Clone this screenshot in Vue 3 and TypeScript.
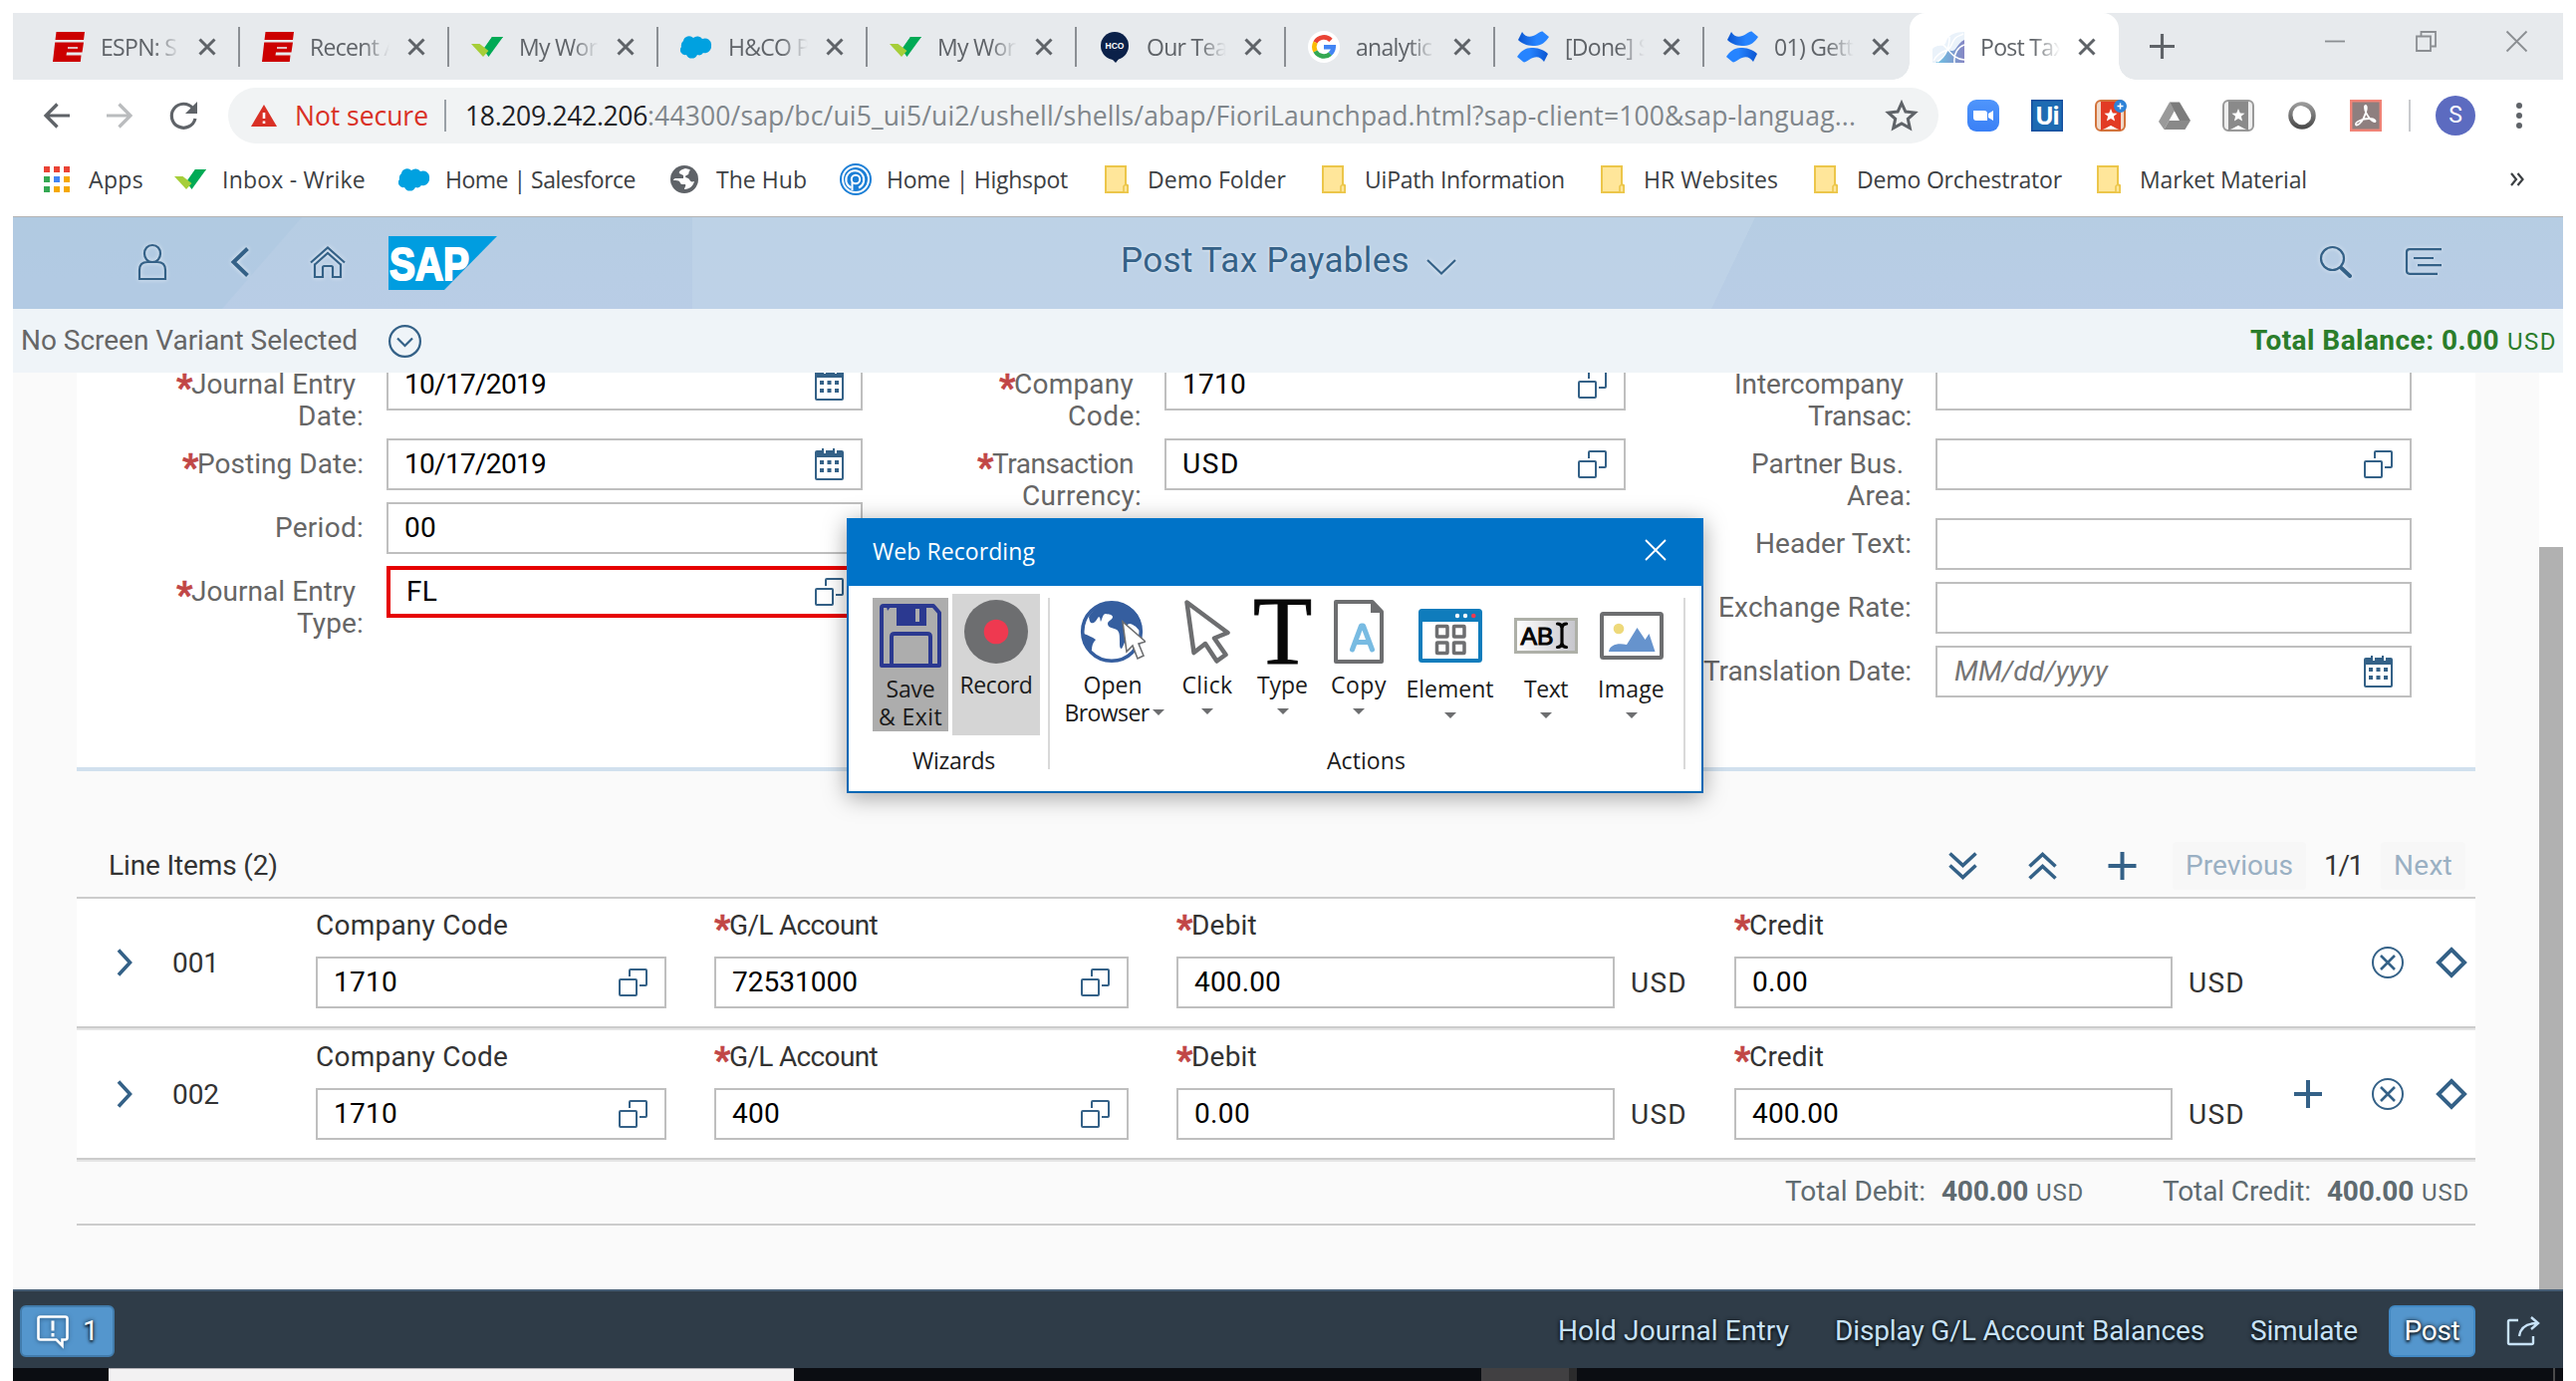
<script setup lang="ts">
import type { Directive } from 'vue'

interface Tab { icon: string; title: string; active?: boolean }
interface Bookmark { icon: string; label: string; iconWidth: number; gap: number; width: number; after: number }
interface Field {
  lines: [string, number][]
  required?: boolean
  value?: string
  width?: number
  icon?: string
  placeholder?: boolean
  error?: boolean
}
interface LineItem { id: string; company: string; account: string; accountWidth: number; debit: string; debitWidth: number; credit: string; creditWidth: number; add?: boolean }
interface Action { lines: [string, number][]; icon: string; w: number; h: number; cell: number; top: number; low?: boolean }

// Tracks a label so that it fills the given measure.
const vFit: Directive<HTMLElement, number> = {
  mounted(el, binding) {
    const count = (el.textContent ?? '').length
    if (!count || !binding.value) return
    const natural = el.getBoundingClientRect().width
    el.style.letterSpacing = `${(binding.value - natural) / count}px`
  },
}

const tabs: Tab[] = [
  { icon: 'espn', title: 'ESPN: S' },
  { icon: 'espn', title: 'Recent A' },
  { icon: 'wrike', title: 'My Wor' },
  { icon: 'cloud', title: 'H&CO P' },
  { icon: 'wrike', title: 'My Wor' },
  { icon: 'hco', title: 'Our Tea' },
  { icon: 'google', title: 'analytic' },
  { icon: 'confluence', title: '[Done] S' },
  { icon: 'confluence', title: '01) Gett' },
  { icon: 'fiori', title: 'Post Tax', active: true },
]

const bookmarks: Bookmark[] = [
  { icon: 'apps', label: 'Apps', iconWidth: 26, gap: 19, width: 55, after: 31 },
  { icon: 'wrike', label: 'Inbox - Wrike', iconWidth: 32, gap: 16, width: 144, after: 33 },
  { icon: 'cloud', label: 'Home | Salesforce', iconWidth: 32, gap: 15, width: 191, after: 35 },
  { icon: 'globe', label: 'The Hub', iconWidth: 28, gap: 18, width: 91, after: 33 },
  { icon: 'highspot', label: 'Home | Highspot', iconWidth: 32, gap: 15, width: 182, after: 37 },
  { icon: 'folder', label: 'Demo Folder', iconWidth: 24, gap: 19, width: 139, after: 36 },
  { icon: 'folder', label: 'UiPath Information', iconWidth: 24, gap: 19, width: 201, after: 36 },
  { icon: 'folder', label: 'HR Websites', iconWidth: 24, gap: 19, width: 135, after: 36 },
  { icon: 'folder', label: 'Demo Orchestrator', iconWidth: 24, gap: 19, width: 206, after: 35 },
  { icon: 'folder', label: 'Market Material', iconWidth: 24, gap: 19, width: 168, after: 0 },
]

const extensions = ['zoom', 'uipath', 'wunder-red', 'drive', 'wunder-grey', 'ring', 'acrobat']

const columns: { cls: string; fields: Field[] }[] = [
  {
    cls: 'col-1',
    fields: [
      { lines: [['Journal Entry', 165], ['Date:', 66]], required: true, value: '10/17/2019', width: 142, icon: 'calendar' },
      { lines: [['Posting Date:', 167]], required: true, value: '10/17/2019', width: 142, icon: 'calendar' },
      { lines: [['Period:', 89]], value: '00', width: 32 },
      { lines: [['Journal Entry', 165], ['Type:', 67]], required: true, value: 'FL', width: 31, icon: 'help', error: true },
    ],
  },
  {
    cls: 'col-2',
    fields: [
      { lines: [['Company', 120], ['Code:', 74]], required: true, value: '1710', width: 64, icon: 'help' },
      { lines: [['Transaction', 142], ['Currency:', 120]], required: true, value: 'USD', width: 58, icon: 'help' },
    ],
  },
  {
    cls: 'col-3',
    fields: [
      { lines: [['Intercompany', 170], ['Transac:', 104]] },
      { lines: [['Partner Bus.', 153], ['Area:', 65]], icon: 'help' },
      { lines: [['Header Text:', 157]] },
      { lines: [['Exchange Rate:', 194]] },
      { lines: [['Translation Date:', 209]], value: 'MM/dd/yyyy', width: 154, icon: 'calendar', placeholder: true },
    ],
  },
]

const items: LineItem[] = [
  { id: '001', company: '1710', account: '72531000', accountWidth: 126, debit: '400.00', debitWidth: 87, credit: '0.00', creditWidth: 56 },
  { id: '002', company: '1710', account: '400', accountWidth: 48, debit: '0.00', debitWidth: 56, credit: '400.00', creditWidth: 87, add: true },
]

const totals = [
  { label: 'Total Debit:', width: 141, value: '400.00' },
  { label: 'Total Credit:', width: 149, value: '400.00' },
]

const actions: Action[] = [
  { lines: [['Open', 59], ['Browser', 85]], icon: 'browser', w: 66, h: 64, cell: 96, top: 0 },
  { lines: [['Click', 51]], icon: 'pointer', w: 46, h: 64, cell: 52, top: 0 },
  { lines: [['Type', 51]], icon: 'type', w: 57, h: 64, cell: 57, top: 0 },
  { lines: [['Copy', 56]], icon: 'copy', w: 50, h: 64, cell: 54, top: 0 },
  { lines: [['Element', 88]], icon: 'element', w: 64, h: 54, cell: 87, top: 9, low: true },
  { lines: [['Text', 44]], icon: 'text', w: 64, h: 36, cell: 64, top: 18, low: true },
  { lines: [['Image', 67]], icon: 'image', w: 64, h: 48, cell: 65, top: 12, low: true },
]
</script>

<template>
  <div class="screen">
    <svg class="sprite" width="0" height="0">
      <defs>
        <linearGradient id="cf" x1="0" y1="0" x2="1" y2="0"><stop offset="0" stop-color="#0b55d0" /><stop offset=".6" stop-color="#2684ff" /></linearGradient>
        <linearGradient id="cf2" x1="1" y1="0" x2="0" y2="0"><stop offset="0" stop-color="#0b55d0" /><stop offset=".6" stop-color="#2684ff" /></linearGradient>
        <linearGradient id="fi" x1="0" y1="0" x2="1" y2="0"><stop offset="0" stop-color="#4fb8e0" /><stop offset="1" stop-color="#6d6cb6" /></linearGradient>
        <linearGradient id="tx" x1="0" y1="0" x2="1" y2="0"><stop offset="0" stop-color="#fff" /><stop offset="1" stop-color="#c5c5cb" /></linearGradient>
        <linearGradient id="rg" x1="0" y1="0" x2="0" y2="1"><stop offset="0" stop-color="#999" /><stop offset="1" stop-color="#4d4d4d" /></linearGradient>
        <linearGradient id="zm" x1="0" y1="0" x2="0" y2="1"><stop offset="0" stop-color="#4f95fb" /><stop offset="1" stop-color="#3a80f6" /></linearGradient>
      </defs>
      <symbol id="espn" viewBox="0 0 32 32"><path fill="#c00" d="M3.500 1H32l-1 8H2.500zM2.200 11.500H31l-1.500 10H14l-.5 3H28.500L27.800 31H0z" /><path stroke="#e7eaed" stroke-width="1.600" d="M15 17h10" /></symbol>
      <symbol id="wrike" viewBox="0 0 32 32"><path fill="#0a5" d="M21 6h11L17.500 26 12 18.500z" /><path fill="#a6ce39" d="M0 13h8.500L17.500 20 12 26z" /><path fill="#0a5" d="M21 6h11L18 20l-3-5z" /></symbol>
      <symbol id="cloud" viewBox="0 0 32 32"><path fill="#00a1e0" d="M3 10a6 6 0 0 1 10-3 6 6 0 0 1 9 1 6.500 6.500 0 0 1 9 7 6.500 6.500 0 0 1-8 7 5 5 0 0 1-6 2 6 6 0 0 1-11 0 5 5 0 0 1-5-8 6 6 0 0 1 2-6z" /></symbol>
      <symbol id="hco" viewBox="0 0 32 32"><circle cx="16" cy="15" r="14" fill="#0b2149" /><path fill="#0b2149" d="M12 27l5 5 4-5z" /></symbol>
      <symbol id="google" viewBox="0 0 32 32"><circle cx="16" cy="16" r="16" fill="#fff" /><g fill="none" stroke-width="4.600"><path stroke="#ea4335" d="M7.500 11.500A9.700 9.700 0 0 1 23 9.300" /><path stroke="#fbbc05" d="M7.500 11.500a9.700 9.700 0 0 0 0 9" /><path stroke="#34a853" d="M7.500 20.500A9.700 9.700 0 0 0 22.500 23" /><path stroke="#4285f4" d="M16 16.200h9.700A9.700 9.700 0 0 1 22.300 23" /></g></symbol>
      <symbol id="confluence" viewBox="0 0 32 32"><path fill="url(#cf)" d="M5 1c4 6 9 6 15 2 3-2 5-3 6-2l6 5c-3 5-8 9-14 9S6 14 1 9z" /><path fill="url(#cf2)" d="M27 31c-4-6-9-6-15-2-3 2-5 3-6 2l-6-5c3-5 8-9 14-9s12 1 17 6z" /></symbol>
      <symbol id="fiori" viewBox="0 0 32 32"><path fill="#dceaf7" d="M0 18c6-6 12 0 14-8 2-6 9-9 18-9v31H0z" opacity=".6" /><path fill="url(#fi)" d="M3 32c10-4 8-14 16-12 5 1 6-8 13-11v23z" opacity=".8" /><path fill="none" stroke="#fff" stroke-width="1.500" d="M1 30c8-14 14-6 18-16S26 6 31 3M8 12c8 4 10 16 24 17M17 6c0 12-4 20-12 25M22 32c-1-10 4-16 10-18" /></symbol>
      <symbol id="apps" viewBox="0 0 26 26"><path fill="#ea4335" d="M0 0h6v6H0zM10 0h6v6h-6zM20 0h6v6h-6z" /><path fill="#34a853" d="M0 10h6v6H0zM0 20h6v6H0z" /><path fill="#4285f4" d="M10 10h6v6h-6z" /><path fill="#f5a800" d="M20 10h6v6h-6zM10 20h6v6h-6zM20 20h6v6h-6z" /></symbol>
      <symbol id="globe" viewBox="0 0 28 28"><circle cx="14" cy="14" r="14" fill="#5f6368" /><path fill="#fff" d="M15 3c-4 1-7 3-6 5l4 2v3H5c-1 0-2 1-2 2 3 0 5 0 6 1s1 3 3 3h3c1 2-1 3-1 5 6 0 9-4 10-8-3 1-4 0-5-2s-4-1-4-3c0-1 2-1 3-2s0-2 1-3 1-2 0-2z" /></symbol>
      <symbol id="highspot" viewBox="0 0 32 32"><circle cx="16" cy="16" r="16" fill="#1c7fd6" /><g fill="none" stroke="#fff" stroke-width="2"><circle cx="16" cy="16" r="13" /><path d="M11.500 24.500A9 9 0 1 1 19 24.500" /></g><circle cx="16" cy="16" r="4.200" fill="#1c7fd6" stroke="#fff" stroke-width="2" /><path fill="none" stroke="#fff" stroke-width="2" d="M12.500 19v8" /></symbol>
      <symbol id="folder" viewBox="0 0 24 28"><path fill="#ffe69a" stroke="#ecc64a" stroke-width="2" d="M1 1h20v18l2 1v7H1z" /><path fill="#ffe69a" stroke="#ecc64a" stroke-width="1.600" d="M19 27v-6l2-2 2 2v6z" /></symbol>
      <symbol id="zoom" viewBox="0 0 32 32"><rect width="32" height="32" rx="9" fill="url(#zm)" /><path fill="#fff" d="M6 11h11q3 0 3 3v7H9q-3 0-3-3zM21 14l5-3v10l-5-3z" /></symbol>
      <symbol id="uipath" viewBox="0 0 32 32"><path fill="#1d6bb2" d="M0 0h32v32H0z" /><path fill="none" stroke="#164f9e" stroke-width="1.500" d="M.7.700h30.600v30.600H.7z" /></symbol>
      <symbol id="wunder-red" viewBox="0 0 32 32"><rect x="1" y="1" width="29" height="30" rx="5" fill="#f0d8c8" stroke="#d2743c" stroke-width="2" /><path fill="#e23b24" d="M6 2h20v29l-10-5-10 5z" /><path fill="#fff" d="M16 9l1.800 4.500 4.700.3-3.600 3 1.200 4.700-4.100-2.600-4.100 2.600 1.200-4.700-3.600-3 4.700-.3zM11 29l5-3 5 3z" /><circle cx="25.500" cy="6.500" r="6.500" fill="#2c82d8" /><path stroke="#fff" stroke-width="1.500" d="M22.500 6.500h6M25.500 3.500v6" /></symbol>
      <symbol id="wunder-grey" viewBox="0 0 32 32"><rect x="1" y="1" width="30" height="30" rx="5" fill="#eee" stroke="#999" stroke-width="2" /><path fill="#8a8a8a" d="M6 2h20v29l-10-5-10 5z" /><path fill="#fff" d="M16 9l1.800 4.500 4.700.3-3.600 3 1.200 4.700-4.100-2.600-4.100 2.600 1.200-4.700-3.600-3 4.700-.3zM11 29l5-3 5 3z" /></symbol>
      <symbol id="drive" viewBox="0 0 32 32"><path fill="#9a9a9a" d="M11 2.500L0 22l5.500 8L16 11z" /><path fill="#7c7c7c" d="M11 2.500h10L32 21H21z" /><path fill="#898989" d="M10.500 21H32l-5.500 9h-21z" /></symbol>
      <symbol id="ring" viewBox="0 0 32 32"><circle cx="16" cy="16" r="11.500" fill="none" stroke="url(#rg)" stroke-width="4.500" /><ellipse cx="14.500" cy="15" rx="8" ry="9" fill="#fff" /></symbol>
      <symbol id="acrobat" viewBox="0 0 32 32"><path fill="#8e7f7f" stroke="#f08377" stroke-width="2.500" d="M1.200 1.200h29.600v29.600H1.200z" /><path fill="none" stroke="#fff" stroke-width="1.800" d="M15 6c3-1 2 6-1 12-2 5-7 9-8 7s6-6 13-6 8 4 5 3-10-9-9-16" /></symbol>
      <symbol id="calendar" viewBox="0 0 29 32"><path fill="currentColor" d="M2 2h5V0h2v5h2V2h7V5h0V0h2v5h2V2h5q2 0 2 2v26q0 2-2 2H2q-2 0-2-2V4q0-2 2-2zm0 7v21h25V9z" /><path fill="currentColor" d="M5 12h4v4H5zM12.500 12h4v4h-4zM20 12h4v4h-4zM5 20h4v4H5zM12.500 20h4v4h-4zM20 20h4v4h-4z" /></symbol>
      <symbol id="help" viewBox="0 0 29 28"><g fill="none" stroke="currentColor" stroke-width="2"><rect x="1" y="11" width="17" height="16" rx="1" /><path d="M11 8V2q0-1 1-1h15q1 0 1 1v14q0 1-1 1h-6" /></g></symbol>
      <symbol id="dots-x" viewBox="0 0 32 32"><g fill="none" stroke="currentColor" stroke-width="2"><circle cx="16" cy="16" r="15" /><path stroke-width="2.600" d="M9 9l14 14M23 9L9 23" /></g></symbol>
      <symbol id="diamond" viewBox="0 0 32 32"><path fill="none" stroke="currentColor" stroke-width="4" d="M16 3L29 16 16 29 3 16z" /></symbol>
      <symbol id="plus" viewBox="0 0 28 28"><path fill="none" stroke="currentColor" stroke-width="4" d="M0 14h28M14 0v28" /></symbol>
      <symbol id="down2" viewBox="0 0 29 28"><path fill="none" stroke="currentColor" stroke-width="3.600" d="M1.500 1.500l13 12 13-12M1.500 13.500l13 12 13-12" /></symbol>
      <symbol id="up2" viewBox="0 0 29 28"><path fill="none" stroke="currentColor" stroke-width="3.600" d="M1.500 14.500l13-12 13 12M1.500 26.500l13-12 13 12" /></symbol>
      <symbol id="browser" viewBox="0 0 66 64"><circle cx="32" cy="32" r="29.300" fill="#fff" stroke="#355e9f" stroke-width="3.600" /><path fill="#355e9f" d="M9 17C16 5 28 1 40 3c10 2 18 9 21 19 1 6 0 9-2 8-3-4-6-5-8-6-3 0-4 1-4 4 1 7-1 14-5 21-2 0-2-3-2-7 0-6 0-10-3-12-4-2-9-2-9-6 0-3 5-4 5-7-1-3-4-2-7-3-3 0-3 4-5 8-1-3 0-4-2-5-2 2-2 4-5 6-3 1-4 0-5-6zM4 34c5 2 8 3 12 6-3 3-4 6-4 11C7 47 4 41 4 34z" /><path fill="#fff" stroke="#6d6e70" stroke-width="1.600" d="M43 22l4 30 6-6 5 13 6-3-5-12 7-2z" /></symbol>
      <symbol id="pointer" viewBox="0 0 46 64"><path fill="none" stroke="#6d6e70" stroke-width="4.500" stroke-linejoin="round" d="M2.500 2.500l41 30.500-13.500 5.500 11.500 16.500-9 6.500-11.500-17.500-11.500 9z" /></symbol>
      <symbol id="copy" viewBox="0 0 50 64"><path fill="none" stroke="#6d6e70" stroke-width="4" stroke-linejoin="round" d="M2 2h36.500L48 12v50H2z" /><path fill="#6d6e70" d="M37 2l12 11H37z" /><path fill="none" stroke="#78bbe2" stroke-width="5" stroke-linecap="round" stroke-linejoin="round" d="M18.500 50L27.500 26h2L38.500 50M21.500 42.500h14" /></symbol>
      <symbol id="element" viewBox="0 0 64 54"><rect x="2" y="2" width="60" height="50" rx="1.500" fill="#fff" stroke="#0f7cbc" stroke-width="4" /><path fill="#0f7cbc" d="M1 3h62v10H1z" /><circle cx="39" cy="7" r="2.200" fill="#fff" /><circle cx="47" cy="7" r="2.200" fill="#fff" /><circle cx="55.300" cy="7" r="2.300" fill="#ef3950" /><g fill="none" stroke="#6d6e70" stroke-width="3.500"><rect x="18.500" y="17.500" width="10.500" height="10.500" rx=".5" /><rect x="35.500" y="17.500" width="10.500" height="10.500" rx=".5" /><rect x="18.500" y="34" width="10.500" height="10.500" rx=".5" /><rect x="35.500" y="34" width="10.500" height="10.500" rx=".5" /></g></symbol>
      <symbol id="text" viewBox="0 0 64 36"><rect x="1.500" y="1.500" width="61" height="33" fill="url(#tx)" stroke="#aeb0a8" stroke-width="3" /><path fill="none" stroke="#050505" stroke-width="3.200" stroke-linecap="round" d="M43.500 6q4 0 4.500 4 .5-4 4.500-4M48 10v15M43.500 29.500q4 0 4.500-4 .5 4 4.500 4" /></symbol>
      <symbol id="image" viewBox="0 0 64 48"><rect x="2" y="2" width="60" height="44" rx="1.500" fill="#fff" stroke="#6d6e70" stroke-width="4" /><circle cx="19" cy="17" r="5.300" fill="#eed97a" /><path fill="#6693cd" d="M9 40c1-7 9-9 18-7L37.500 16l8 12 4-6 6 18z" /></symbol>
    </svg>

    <header class="chrome">
      <div class="tabstrip">
        <div v-for="(t, i) in tabs" :key="i" class="tab" :class="{ active: t.active }">
          <svg class="favicon"><use :href="'#' + t.icon" /><text v-if="t.icon === 'hco'" x="16" y="18" class="hco-text">HCO</text></svg>
          <span class="tab-title">{{ t.title }}</span>
          <svg class="tab-close" viewBox="0 0 18 18"><path d="M1.500 1.500l15 15M16.500 1.500l-15 15" /></svg>
        </div>
        <svg class="new-tab" viewBox="0 0 24 24"><path d="M0 12h24M12 0v24" /></svg>
        <div class="window-buttons">
          <svg viewBox="0 0 21 21"><path d="M0 10.500h20" /></svg>
          <svg viewBox="0 0 21 21"><path d="M1 5.500h14V20H1zM5.500 5V1H20v14.500h-4.500" /></svg>
          <svg viewBox="0 0 21 21"><path d="M.5.500l20 20M20.500.500l-20 20" /></svg>
        </div>
      </div>

      <div class="toolbar">
        <svg class="nav" viewBox="0 0 26 26"><path d="M26 13H2M13.500 1.500L2 13l11.500 11.500" /></svg>
        <svg class="nav faded" viewBox="0 0 26 26"><path d="M0 13h24M12.500 1.500L24 13 12.500 24.500" /></svg>
        <svg class="nav" viewBox="0 0 28 28"><path d="M23.500 6.500A12 12 0 1 0 26 17" /><path class="solid" d="M28 0v12H16z" /></svg>
        <div class="omnibox">
          <svg class="warn" viewBox="0 0 26 22"><path fill="#d93025" d="M13 0l13 22H0z" /><path stroke="#fff" stroke-width="2.600" d="M13 8v6M13 16.500v2.600" /></svg>
          <span v-fit="134" class="insecure">Not secure</span>
          <i class="rule" />
          <span class="url"><b v-fit="183">18.209.242.206</b><span v-fit="1213">:44300/sap/bc/ui5_ui5/ui2/ushell/shells/abap/FioriLaunchpad.html?sap-client=100&amp;sap-languag...</span></span>
          <svg class="star" viewBox="0 0 32 30"><path d="M16 2.500l3.900 8.600 9.400 1-7 6.300 2 9.200L16 22.900l-8.300 4.700 2-9.200-7-6.300 9.400-1z" /></svg>
        </div>
        <div class="extensions">
          <svg v-for="e in extensions" :key="e"><use :href="'#' + e" /><text v-if="e === 'uipath'" x="4" y="25" textLength="25" class="ui-text">Ui</text></svg>
        </div>
        <i class="ext-rule" />
        <span class="avatar">S</span>
        <span class="kebab"><i /><i /><i /></span>
      </div>

      <nav class="bookmarks">
        <div v-for="b in bookmarks" :key="b.label" class="bookmark" :style="{ gap: b.gap + 'px', marginRight: b.after + 'px' }">
          <svg :style="{ width: b.iconWidth + 'px' }"><use :href="'#' + b.icon" /></svg>
          <span v-fit="b.width">{{ b.label }}</span>
        </div>
        <svg class="more" viewBox="0 0 14 14"><path d="M1 1l5 6-5 6M7.500 1l5 6-5 6" /></svg>
      </nav>
    </header>

    <div class="shell">
      <svg class="shell-art" viewBox="0 0 2560 92" preserveAspectRatio="none">
        <defs><linearGradient id="sh" x1="0" y1="0" x2="0" y2="1"><stop offset="0" stop-color="#b6cde3" /><stop offset="1" stop-color="#b9cde6" /></linearGradient></defs>
        <path fill="url(#sh)" d="M0 0h2560v92H0z" />
        <path fill="#a8c5e0" opacity=".38" d="M0 0h290l-80 92H0z" />
        <path fill="#c3d7e9" opacity=".55" d="M682 0h1067l-44 92H682z" />
      </svg>
      <div class="shell-left">
        <svg class="i-person" viewBox="0 0 28 36"><path d="M14 1c5 0 8 4 8 8.500S19 18 14 18s-8-4-8-8.500S9 1 14 1zM1 35V26q0-8 8-8h10q8 0 8 8v9z" /></svg>
        <svg class="i-back" viewBox="0 0 18 30"><path d="M16.500 1.500L2.500 15l14 13.500" /></svg>
        <svg class="i-home" viewBox="0 0 36 32"><path d="M1 16.500L18 1.500l17 15M4.500 19L18 7l13.500 12M5 17.500V31h8V21.500q0-1.500 1.500-1.500h7q1.500 0 1.500 1.500V31h8V17.500" /></svg>
        <svg class="i-sap" viewBox="0 0 109 54"><path fill="#009de0" d="M0 0h109L56 54H0z" /><text x="1" y="44" font-family="Liberation Sans, sans-serif" font-weight="700" font-size="46" textLength="80" lengthAdjust="spacingAndGlyphs" fill="#fff" stroke="#fff" stroke-width="2">SAP</text></svg>
      </div>
      <div class="shell-title">
        <span v-fit="290">Post Tax Payables</span>
        <svg viewBox="0 0 30 16"><path d="M1 1l14 13.500L29 1" /></svg>
      </div>
      <div class="shell-right">
        <svg class="i-search" viewBox="0 0 32 32"><circle cx="12.500" cy="12.500" r="11.500" /><path stroke-width="4" stroke-linecap="round" d="M21.500 22l8.500 8" /></svg>
        <svg class="i-menu" viewBox="0 0 36 27"><path d="M36 1.200H4q-3 0-3 3v18.600q0 3 3 3h28M8 10h20M12 17.200h24" /></svg>
      </div>
    </div>

    <div class="variant">
      <span v-fit="338">No Screen Variant Selected</span>
      <svg viewBox="0 0 33 33"><circle cx="16.500" cy="16.500" r="15.400" /><path d="M9 13.500l7.500 7.500 7.500-7.500" /></svg>
      <div class="balance"><b v-fit="250">Total Balance: 0.00</b><span v-fit="50">USD</span></div>
    </div>

    <div class="body">
      <main class="work">
        <section class="panel">
          <div v-for="c in columns" :key="c.cls" class="col" :class="c.cls">
            <div v-for="(f, i) in c.fields" :key="i" class="field">
              <div class="label">
                <div v-for="(l, n) in f.lines" :key="n" class="label-line" :class="{ wrapped: n < f.lines.length - 1 }">
                  <b v-if="f.required && n === 0" class="req">*</b><span v-fit="l[1]">{{ l[0] }}</span>
                </div>
              </div>
              <div class="input" :class="{ error: f.error, hint: f.placeholder }">
                <span v-if="f.value" v-fit="f.width ?? 0">{{ f.value }}</span>
                <svg v-if="f.icon" :class="'ic-' + f.icon"><use :href="'#' + f.icon" /></svg>
              </div>
            </div>
          </div>
        </section>

        <div class="list-bar">
          <span v-fit="170">Line Items (2)</span>
          <div class="list-tools">
            <svg><use href="#down2" /></svg>
            <svg><use href="#up2" /></svg>
            <svg><use href="#plus" /></svg>
          </div>
          <span class="pager prev"><span v-fit="108">Previous</span></span>
          <span class="page"><span v-fit="39">1/1</span></span>
          <span class="pager next"><span v-fit="59">Next</span></span>
        </div>

        <section class="table">
          <div v-for="r in items" :key="r.id" class="row">
            <svg class="expand" viewBox="0 0 16 28"><path d="M2 1.500L13.500 14 2 26.500" /></svg>
            <span class="id"><span v-fit="47">{{ r.id }}</span></span>
            <div class="cell company">
              <label><span v-fit="193">Company Code</span></label>
              <div class="input"><span v-fit="64">{{ r.company }}</span><svg class="ic-help"><use href="#help" /></svg></div>
            </div>
            <div class="cell account">
              <label><b class="req">*</b><span v-fit="149">G/L Account</span></label>
              <div class="input"><span v-fit="r.accountWidth">{{ r.account }}</span><svg class="ic-help"><use href="#help" /></svg></div>
            </div>
            <div class="cell amount">
              <label><b class="req">*</b><span v-fit="66">Debit</span></label>
              <div class="pair"><div class="input"><span v-fit="r.debitWidth">{{ r.debit }}</span></div><span v-fit="57">USD</span></div>
            </div>
            <div class="cell amount">
              <label><b class="req">*</b><span v-fit="75">Credit</span></label>
              <div class="pair"><div class="input"><span v-fit="r.creditWidth">{{ r.credit }}</span></div><span v-fit="57">USD</span></div>
            </div>
            <div class="row-tools">
              <span class="slot"><svg v-if="r.add"><use href="#plus" /></svg></span>
              <svg class="big"><use href="#dots-x" /></svg>
              <svg class="big"><use href="#diamond" /></svg>
            </div>
          </div>
          <div class="totals">
            <div v-for="t in totals" :key="t.label" class="total">
              <span v-fit="t.width">{{ t.label }}</span><b v-fit="87">{{ t.value }}</b><small v-fit="48">USD</small>
            </div>
          </div>
        </section>
      </main>
      <div class="scroll"><div class="thumb" /></div>
    </div>

    <footer class="footer">
      <span class="badge">
        <svg viewBox="0 0 32 32"><path d="M3.500 1.500h25q2 0 2 2v19q0 2-2 2h-3v6l-6-6h-16q-2 0-2-2v-19q0-2 2-2z" /><path stroke-width="3" d="M16 5.500v10M16 18v3.500" /></svg>
        <span>1</span>
      </span>
      <div class="footer-actions">
        <span v-fit="232">Hold Journal Entry</span>
        <span v-fit="371" class="f2">Display G/L Account Balances</span>
        <span v-fit="108" class="f3">Simulate</span>
        <span class="post"><span v-fit="56">Post</span></span>
        <svg viewBox="0 0 34 30"><path d="M12 4H3.500Q2 4 2 5.500v21Q2 28 3.500 28h22q1.500 0 1.500-1.500V20M13 20q2-13 18-13M25 1l7 6-7 6" /></svg>
      </div>
    </footer>

    <div class="desktop"><i class="d1" /><i class="d2" /><i class="d3" /></div>

    <div class="dialog">
      <div class="dialog-head">
        <span v-fit="163">Web Recording</span>
        <svg viewBox="0 0 22 22"><path d="M1 1l20 20M21 1L1 21" /></svg>
      </div>
      <div class="ribbon">
        <div class="group wizards">
          <div class="buttons">
            <div class="btn save">
              <svg viewBox="0 0 62 64"><g fill="none" stroke="#2b3990" stroke-width="4" stroke-linejoin="round"><path d="M4 2h50l6 7v53H2V4q0-2 2-2zM12 62V33q0-3 3-3h33q3 0 3 3v29" /></g><path fill="#2b3990" d="M17 2h30v20H17zM7 3l4 0-3 4z" /><path fill="#adadad" d="M36 5h4v13h-4z" /></svg>
              <span v-fit="49">Save</span><span v-fit="64">&amp; Exit</span>
            </div>
            <div class="btn record">
              <svg viewBox="0 0 64 64"><circle cx="32" cy="32" r="32" fill="#6d6e70" /><circle cx="32" cy="32" r="12.300" fill="#ef3950" /></svg>
              <span v-fit="73">Record</span>
            </div>
          </div>
          <div class="caption"><span v-fit="83">Wizards</span></div>
        </div>
        <div class="group acts">
          <div class="buttons">
            <div v-for="a in actions" :key="a.icon" class="act" :class="{ low: a.low }" :style="{ width: a.cell + 'px' }">
              <svg :style="{ width: a.w + 'px', height: a.h + 'px', marginTop: a.top + 'px' }">
                <text v-if="a.icon === 'type'" x="28.500" y="63.500" class="t-glyph">T</text>
                <use v-else :href="'#' + a.icon" />
                <text v-if="a.icon === 'text'" x="6.500" y="26.500" textLength="33" lengthAdjust="spacingAndGlyphs" class="ab-glyph">AB</text>
              </svg>
              <div class="act-text">
                <span v-for="(l, n) in a.lines" :key="n" class="act-line" :class="{ tail: n === 1 }"><span v-fit="l[1]">{{ l[0] }}</span><i v-if="n === 1" class="caret" /></span>
                <i v-if="a.lines.length === 1" class="caret below" />
              </div>
            </div>
          </div>
          <div class="caption"><span v-fit="79">Actions</span></div>
        </div>
      </div>
    </div>
  </div>
</template>

<style>
body { margin: 0; background: #fff; }
</style>

<style scoped>
* { box-sizing: border-box; }
.screen { position: relative; width: 2586px; height: 1386px; padding: 13px 13px 0; overflow: hidden; display: flex; flex-direction: column; background: #fff; font: 28px/32px Roboto, "Liberation Sans", sans-serif; color: #333; white-space: pre; }
.sprite { position: absolute; }
svg { display: block; flex: none; overflow: visible; }
span, b, small, i { flex: none; }

/* browser chrome */
.chrome { height: 205px; border-bottom: 1px solid #b4b4b4; font-family: "Open Sans", "Noto Sans", sans-serif; }
.tabstrip { display: flex; align-items: center; height: 67px; padding-left: 17px; background: #e7eaed; }
.tab { position: relative; display: flex; align-items: center; width: 210px; height: 67px; padding-left: 23px; }
.tab::after { content: ""; position: absolute; right: -1px; top: 14px; width: 2px; height: 40px; background: #8b8f94; }
.tab:nth-child(9)::after, .tab.active::after { display: none; }
.tab.active { left: -3px; background: #fff; border-radius: 16px 16px 0 0; }
.tab.active::before { content: ""; position: absolute; left: -17px; right: -17px; bottom: 0; height: 17px; background: radial-gradient(circle at 0 0, transparent 16.500px, #fff 17px) 0 0 / 17px 17px no-repeat, radial-gradient(circle at 17px 0, transparent 16.500px, #fff 17px) 100% 0 / 17px 17px no-repeat; }
.favicon { width: 32px; height: 32px; }
.hco-text { font: 700 8.500px "Liberation Sans", sans-serif; text-anchor: middle; fill: #fff; }
.tab-title { width: 80px; margin-left: 16px; overflow: hidden; font-size: 23px; letter-spacing: -.7px; color: #5f6368; -webkit-mask-image: linear-gradient(90deg, #000 66%, transparent); mask-image: linear-gradient(90deg, #000 66%, transparent); }
.tab-close { width: 18px; height: 18px; margin-left: 18px; }
.tab-close path, .new-tab path { fill: none; stroke: #5f6368; stroke-width: 3; }
.new-tab { width: 25px; height: 25px; margin-left: 28px; }
.window-buttons { display: flex; gap: 70px; margin: -10px 0 0 151px; }
.window-buttons svg { width: 21px; height: 21px; }
.window-buttons path { fill: none; stroke: #8b8e92; stroke-width: 1.800; }
.toolbar { display: flex; align-items: center; height: 72px; padding: 0 0 1px 31px; }
.nav { width: 26px; height: 26px; margin-right: 37px; }
.nav path { fill: none; stroke: #5f6368; stroke-width: 3.200; }
.nav .solid { fill: #5f6368; stroke: none; }
.nav.faded path { stroke: #babcbe; }
.nav:nth-child(3) { width: 28px; height: 28px; margin-right: 31px; }
.omnibox { display: flex; align-items: center; width: 1717px; height: 56px; padding: 0 20px 0 23px; border-radius: 28px; background: #f1f3f4; font-size: 26.500px; }
.warn { width: 26px; height: 22px; margin-right: 18px; }
.insecure { color: #d93025; }
.rule { width: 2px; height: 32px; margin: 0 19px 0 16px; background: #9aa0a6; }
.url { display: flex; width: 1410px; color: #80868b; }
.url b { font-weight: 400; color: #202124; }
.star { width: 32px; height: 30px; margin-left: 16px; }
.star path { fill: none; stroke: #5f6368; stroke-width: 3; }
.extensions { display: flex; gap: 32px; margin-left: 29px; }
.extensions svg { width: 32px; height: 32px; }
.ui-text { font: 700 25px "Open Sans", sans-serif; fill: #fff; }
.ext-rule { width: 2px; height: 32px; margin: 0 25px 0 27px; background: #c9cbce; }
.avatar { width: 40px; height: 40px; border-radius: 50%; background: #5c6bc0; color: #fff; font: 23px/40px Roboto, sans-serif; text-align: center; }
.kebab { display: flex; flex-direction: column; gap: 4px; margin-left: 41px; }
.kebab i { width: 6px; height: 6px; border-radius: 50%; background: #5f6368; }
.bookmarks { display: flex; align-items: center; height: 65px; padding: 0 39px 9px 31px; font-size: 23px; color: #3c4043; }
.bookmark { display: flex; align-items: center; height: 52px; }
.bookmark svg { height: 32px; }
.bookmarks .more { width: 14px; height: 14px; margin-left: auto; }
.more path { fill: none; stroke: #3c4043; stroke-width: 2.200; }

/* launchpad shell bar */
.shell { position: relative; display: flex; align-items: center; height: 92px; color: #346187; }
.shell-art { position: absolute; inset: 0; width: 2560px; height: 92px; }
.shell svg:not(.shell-art) path, .shell circle { fill: none; stroke: #346187; stroke-width: 2.200; }
.shell svg:not(.shell-art):not(.i-sap) { filter: drop-shadow(0 0 2px rgba(255, 255, 255, .7)); }
.shell-left, .shell-title, .shell-right { position: relative; display: flex; align-items: center; }
.shell-left { width: 1112px; padding: 0 0 3px 126px; }
.i-person { width: 28px; height: 36px; }
.i-back { width: 18px; height: 30px; margin-left: 65px; }
.shell .i-back path { stroke-width: 4 !important; }
.i-home { width: 36px; height: 32px; margin-left: 61px; }
.i-sap { width: 109px; height: 54px; margin: 3px 0 0 43px; }
.shell .i-sap path { fill: #009de0 !important; stroke: none !important; }
.shell-title { width: 1180px; font-size: 35px; line-height: 44px; padding-bottom: 4px; text-shadow: 0 0 3px rgba(255, 255, 255, .8); }
.shell-title svg { width: 30px; height: 16px; margin: 11px 0 0 17px; }
.shell-right { padding: 0 0 3px 24px; }
.i-search { width: 32px; height: 32px; }
.shell .i-search path { stroke-width: 4 !important; }
.i-menu { width: 36px; height: 27px; margin-left: 54px; }
.variant { display: flex; align-items: center; height: 64px; padding: 0 6px 0 8px; background: #eff4f8; color: #666; }
.variant svg { width: 33px; height: 33px; margin-left: 31px; fill: none; stroke: #346187; stroke-width: 2.200; }
.balance { display: flex; align-items: baseline; gap: 8px; margin-left: auto; color: #2b7d2b; padding-top: 1px; }
.balance b { font-weight: 700; }
.balance span { font-size: 24px; }

/* work area */
.body { display: flex; height: 920px; overflow: hidden; }
.work { width: 2536px; height: 920px; padding: 0 64px; overflow: hidden; background: #fafafa; }
.scroll { width: 24px; padding-top: 175px; background: #fff; }
.thumb { height: 745px; background: #b1b1b1; }
.panel { display: flex; align-items: flex-start; gap: 20px; height: 414px; margin-top: -14px; border-bottom: 4px solid #d1e0ee; background: #fff; }
.field { display: flex; align-items: flex-start; min-height: 64px; }
.label { padding: 10px 0 6px; color: #666; }
.label-line { display: flex; justify-content: flex-end; height: 32px; }
.label-line.wrapped { padding-right: 8px; }
.req { width: 15px; color: #c14646; font-size: 36px; line-height: 38px; height: 32px; display: inline-block; text-align: center; -webkit-text-stroke: .6px #c14646; }
.col-1 .label { width: 288px; margin-right: 23px; }
.col-2 .label { width: 260px; margin-right: 23px; }
.col-3 .label { width: 267px; margin-right: 24px; }
.input { display: flex; align-items: center; justify-content: space-between; height: 52px; border: 2px solid #bfbfbf; background: #fff; color: #000; padding: 0 17px 0 16px; }
.input.error { border: 4px solid #e60000; padding: 0 15px 0 16px; }
.input.hint { color: #757575; font-style: italic; padding-left: 17px; }
.input svg { margin-left: auto; color: #346187; }
.col-1 .input, .col-3 .input { width: 478px; }
.col-2 .input { width: 463px; }
.ic-calendar { width: 29px; height: 32px; }
.ic-help { width: 29px; height: 28px; }
.list-bar { display: flex; align-items: center; height: 126px; padding: 63px 10px 0 32px; }
.list-tools { display: flex; gap: 51px; margin-left: auto; margin-right: 36px; color: #346187; }
.list-tools svg { width: 29px; height: 28px; }
.pager { display: flex; align-items: center; justify-content: center; height: 48px; border-radius: 4px; background: #f7f7f7; color: #9ab0c3; }
.prev { width: 134px; }
.next { width: 85px; }
.page { margin: 0 18px; text-shadow: 0 1px 0 #fff; }
.table { border-top: 2px solid #ccc; }
.row { display: grid; grid-template-columns: 97px 143px 400px 464px 560px 562px 182px; align-items: center; height: 132px; border-bottom: 2px solid #e5e5e5; box-shadow: inset 0 -2px 0 #ccc; background: #fff; padding-bottom: 2px; }
.expand { width: 16px; height: 28px; margin-left: 40px; }
.expand path { fill: none; stroke: #346187; stroke-width: 3.600; }
.id { padding-top: 2px; margin-left: -1px; }
.cell { align-self: start; padding-top: 11px; }
.cell label { display: flex; height: 32px; margin-bottom: 15px; }
.company .input { width: 352px; }
.account .input { width: 416px; }
.pair { display: flex; align-items: center; gap: 16px; }
.pair > span { padding-top: 2px; }
.pair .input { width: 440px; }
.row-tools { display: flex; align-items: center; color: #346187; }
.slot { width: 28px; margin-right: 50px; }
.slot svg { width: 28px; height: 28px; }
.big { width: 32px; height: 32px; }
.big + .big { margin-left: 32px; }
.totals { display: flex; justify-content: flex-end; height: 64px; gap: 79px; padding: 14px 6px 0 0; border-bottom: 2px solid #ccc; color: #5f6b70; }
.total { display: flex; align-items: baseline; }
.total b { margin: 0 8px 0 16px; }
.total small { font-size: 24px; }

/* footer */
.footer { display: flex; align-items: center; height: 79px; padding: 2px 23px 0 7px; border-top: 2px solid #475e75; background: #2f3c48; color: #c8e2f7; text-shadow: 0 0 4px #0d1318, 0 2px 3px #0d1318; }
.badge { display: flex; align-items: center; width: 95px; height: 52px; padding-left: 15px; gap: 14px; border: 2px solid #427cac; border-radius: 6px; background: #5496cd; color: #fff; }
.badge svg { width: 32px; height: 32px; fill: none; stroke: #fff; stroke-width: 2.600; filter: drop-shadow(0 1px 2px rgba(20, 50, 80, .6)); }
.footer-actions { display: flex; align-items: center; margin-left: auto; }
.f2 { margin-left: 46px; }
.f3 { margin-left: 46px; }
.post { display: flex; align-items: center; justify-content: center; width: 87px; height: 52px; margin: 0 31px; border: 2px solid #4289c4; border-radius: 6px; background: #5496cd; color: #fff; }
.footer-actions svg { width: 34px; height: 30px; fill: none; stroke: #c8e2f7; stroke-width: 2.400; }
.desktop { display: flex; height: 13px; background: #0b0d12; }
.d1 { width: 688px; margin-left: 96px; border-top: 1px solid #b5b2b8; background: #f2f1f2; }
.d2 { width: 96px; margin-left: 690px; background: #414042; border-right: 8px solid #2b2b2c; }
.d3 { width: 2px; margin-left: 980px; background: #4a4a4a; }

/* recorder window */
.dialog { position: absolute; left: 850px; top: 520px; width: 860px; height: 276px; border: 2px solid #0067b4; border-top: 0; background: #fff; color: #1b1b1b; font: 23px/28px "Open Sans", "Noto Sans", sans-serif; box-shadow: 0 4px 22px rgba(0, 0, 0, .36); }
.dialog-head { display: flex; align-items: center; justify-content: space-between; height: 68px; margin: 0 -2px; padding: 0 37px 3px 26px; background: #0073c8; color: #fff; }
.dialog-head svg { width: 22px; height: 22px; margin-top: -2px; fill: none; stroke: #fff; stroke-width: 1.800; }
.ribbon { display: flex; padding: 12px 0 0 24px; }
.group { position: relative; height: 172px; border-right: 2px solid #d9d9d9; }
.wizards { width: 178px; }
.acts { width: 638px; padding-left: 15px; }
.buttons { display: flex; height: 149px; }
.caption { display: flex; }
.wizards .caption { margin-left: 40px; }
.acts .caption { margin-left: 263px; }
.btn { display: flex; flex-direction: column; align-items: center; }
.save { width: 76px; height: 134px; padding-top: 6px; background: #adadad; }
.save svg { width: 62px; height: 64px; margin-bottom: 7px; }
.record { width: 88px; height: 142px; margin: -4px 0 0 4px; padding-top: 6px; background: #d5d5d5; }
.record svg { width: 64px; height: 64px; margin-bottom: 7px; }
.acts .buttons { gap: 21px; }
.act { display: flex; flex-direction: column; align-items: center; height: 142px; padding-top: 2px; }
.t-glyph { font: 97px "Liberation Serif", serif; text-anchor: middle; fill: #080808; stroke: #080808; }
.ab-glyph { font: 24px "Liberation Sans", sans-serif; fill: #050505; stroke: #050505; stroke-width: 1px; }
.act-text { display: flex; flex-direction: column; align-items: center; margin-top: auto; height: 69px; }
.act.low .act-text { height: 65px; }
.act-line { display: flex; align-items: center; height: 28px; }
.act-line.tail { margin-left: 3px; }
.caret { width: 0; height: 0; border: 6px solid transparent; border-top-color: #6d6e70; border-bottom: 0; margin-left: 3px; }
.caret.below { margin: 10px 0 0 0; }
</style>
